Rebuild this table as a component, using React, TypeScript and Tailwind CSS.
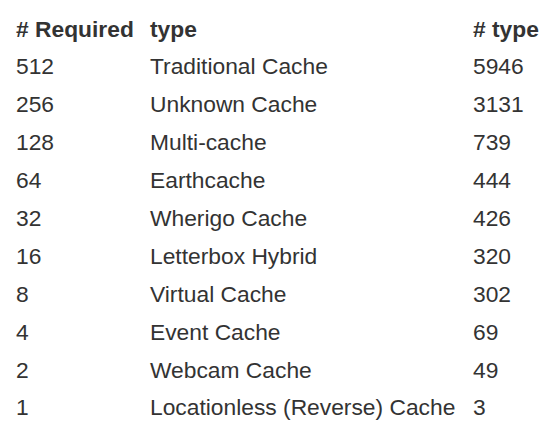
import React from 'react';

interface CacheRow {
  required: number;
  type: string;
  count: number;
}

const rows: CacheRow[] = [
  { required: 512, type: 'Traditional Cache', count: 5946 },
  { required: 256, type: 'Unknown Cache', count: 3131 },
  { required: 128, type: 'Multi-cache', count: 739 },
  { required: 64, type: 'Earthcache', count: 444 },
  { required: 32, type: 'Wherigo Cache', count: 426 },
  { required: 16, type: 'Letterbox Hybrid', count: 320 },
  { required: 8, type: 'Virtual Cache', count: 302 },
  { required: 4, type: 'Event Cache', count: 69 },
  { required: 2, type: 'Webcam Cache', count: 49 },
  { required: 1, type: 'Locationless (Reverse) Cache', count: 3 },
];

const App: React.FC = () => {
  return (
    <div className="w-[549px] h-[445px] bg-white pt-[10px] pl-4 text-[#333] text-[22.8px] font-['Liberation_Sans',Arial,sans-serif]">
      <div className="grid grid-cols-[134px_323px_1fr] auto-rows-[37.9px] items-center leading-none">
        <div className="font-bold">#&nbsp;Required</div>
        <div className="font-bold">type</div>
        <div className="font-bold"># type</div>
        {rows.map((row) => (
          <React.Fragment key={row.required}>
            <div>{row.required}</div>
            <div className="whitespace-nowrap">{row.type}</div>
            <div>{row.count}</div>
          </React.Fragment>
        ))}
      </div>
    </div>
  );
};

export default App;
